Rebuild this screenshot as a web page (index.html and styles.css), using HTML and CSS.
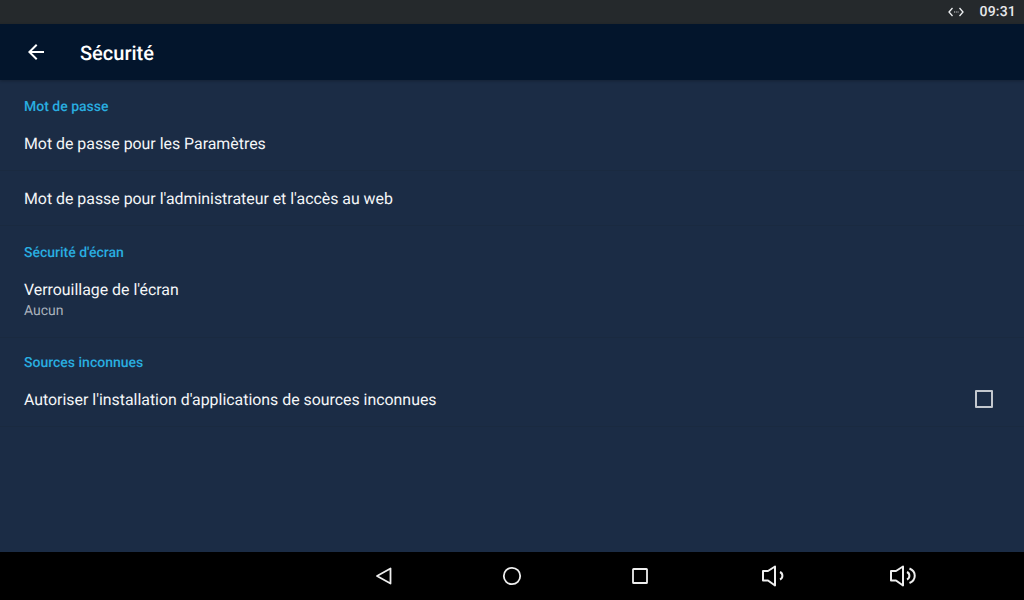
FILE: index.html
```html
<!DOCTYPE html>
<html lang="fr">
<head>
<meta charset="utf-8">
<title>Sécurité</title>
<link rel="stylesheet" href="styles.css">
</head>
<body>
<div class="screen">
  <div class="status">
    <svg class="eth" width="16" height="10" viewBox="0 0 16 10" fill="none" stroke="#eef0f2" stroke-width="1.300"><path d="M4.500 1 1 5l3.500 4M11.500 1 15 5l-3.500 4"/><path d="M6 5h.9M7.800 5h.9M9.600 5h.9" stroke-width="1"/></svg>
    <span class="clock">09:31</span>
  </div>
  <header class="toolbar">
    <svg class="back" width="24" height="24" viewBox="0 0 24 24" fill="#fff"><path d="M20 11H7.830l5.590-5.590L12 4l-8 8 8 8 1.410-1.410L7.830 13H20z"/></svg>
    <h1 class="title">Sécurité</h1>
  </header>
  <main class="content">
    <h2 class="cat">Mot de passe</h2>
    <div class="row"><span class="label">Mot de passe pour les Paramètres</span></div>
    <div class="row"><span class="label">Mot de passe pour l'administrateur et l'accès au web</span></div>
    <h2 class="cat">Sécurité d'écran</h2>
    <div class="row tall"><span class="label">Verrouillage de l'écran</span><span class="sub">Aucun</span></div>
    <h2 class="cat last">Sources inconnues</h2>
    <div class="row check"><span class="label">Autoriser l'installation d'applications de sources inconnues</span><span class="box"></span></div>
  </main>
  <nav class="nav">
    <svg class="nav-icon" width="20" height="20" viewBox="0 0 20 20" fill="none" stroke="#eee" stroke-width="1.800" stroke-linejoin="round"><path d="M16.500 2.500v15L3 10z"/></svg>
    <svg class="nav-icon" width="20" height="20" viewBox="0 0 20 20" fill="none" stroke="#eee" stroke-width="1.800"><circle cx="10" cy="10" r="8.200"/></svg>
    <svg class="nav-icon last-key" width="20" height="20" viewBox="0 0 20 20" fill="none" stroke="#eee" stroke-width="1.800"><rect x="3" y="3" width="14" height="14" rx=".6"/></svg>
    <svg class="nav-icon vol-down" width="24" height="22" viewBox="0 0 24 22" fill="none" stroke="#eee" stroke-width="2" stroke-linejoin="round"><path d="M2 6v9.500h5l7 5v-19l-7 4.500z"/><path d="M19 7c3.200 1.500 3.200 6 0 7.500"/></svg>
    <svg class="nav-icon vol-up" width="28" height="22" viewBox="0 0 28 22" fill="none" stroke="#eee" stroke-width="2" stroke-linejoin="round"><path d="M2 6v9.500h5l7 5v-19l-7 4.500z"/><path d="M18 7c3.200 1.500 3.200 6 0 7.500M20.500 3.500c7 3 7 11.500 0 14.500"/></svg>
  </nav>
</div>
</body>
</html>
```
FILE: styles.css
```css
* { box-sizing: border-box; }
html, body { margin: 0; padding: 0; }
body { font-family: Roboto, "Liberation Sans", sans-serif; background: #1b2c45; text-rendering: geometricPrecision; }
.screen { width: 1024px; height: 600px; display: flex; flex-direction: column; overflow: hidden; }
.status { height: 24px; flex: none; background: #25292c; display: flex; align-items: center; justify-content: flex-end; padding-right: 8px; color: #e8eaec; }
.eth { margin-right: 15px; margin-top: -1px; }
.clock { font-size: 14px; font-weight: 500; letter-spacing: .2px; }
.toolbar { height: 56px; flex: none; background: #03152c; display: flex; align-items: center; padding-left: 24px; box-shadow: 0 1px 3px rgba(0,0,0,.25); position: relative; }
.back { margin-top: -1px; }
.title { margin: 0 0 0 32px; font-size: 20px; font-weight: 500; color: #fff; position: relative; top: 1px; }
.content { flex: 1; display: flex; flex-direction: column; }
.cat { margin: 0; height: 36px; padding: 18px 24px 0; font-size: 14px; line-height: 18px; font-weight: 500; color: #29aee0; }
.cat.last { height: 34px; padding-top: 16px; }
.row { height: 55px; padding: 2px 24px 0; display: flex; flex-direction: column; justify-content: center; border-bottom: 1px solid #1a2a40; }
.row.tall { height: 76px; padding: 1px 24px 0; }
.row.check { flex-direction: row; align-items: center; justify-content: space-between; padding-right: 31px; }
.label { font-size: 15.880px; line-height: 22px; color: #f4f6f8; }
.sub { font-size: 14px; line-height: 20px; color: #a9b1bc; }
.box { width: 18px; height: 18px; border: 2px solid #c3c8ce; border-radius: 1px; margin-top: -2px; }
.nav { height: 48px; flex: none; background: #000; display: flex; align-items: center; padding-left: 374px; }
.nav-icon { flex: none; margin-right: 108px; }
.nav-icon.last-key { margin-right: 111px; }
.nav-icon.vol-down { margin-right: 104px; }
```
